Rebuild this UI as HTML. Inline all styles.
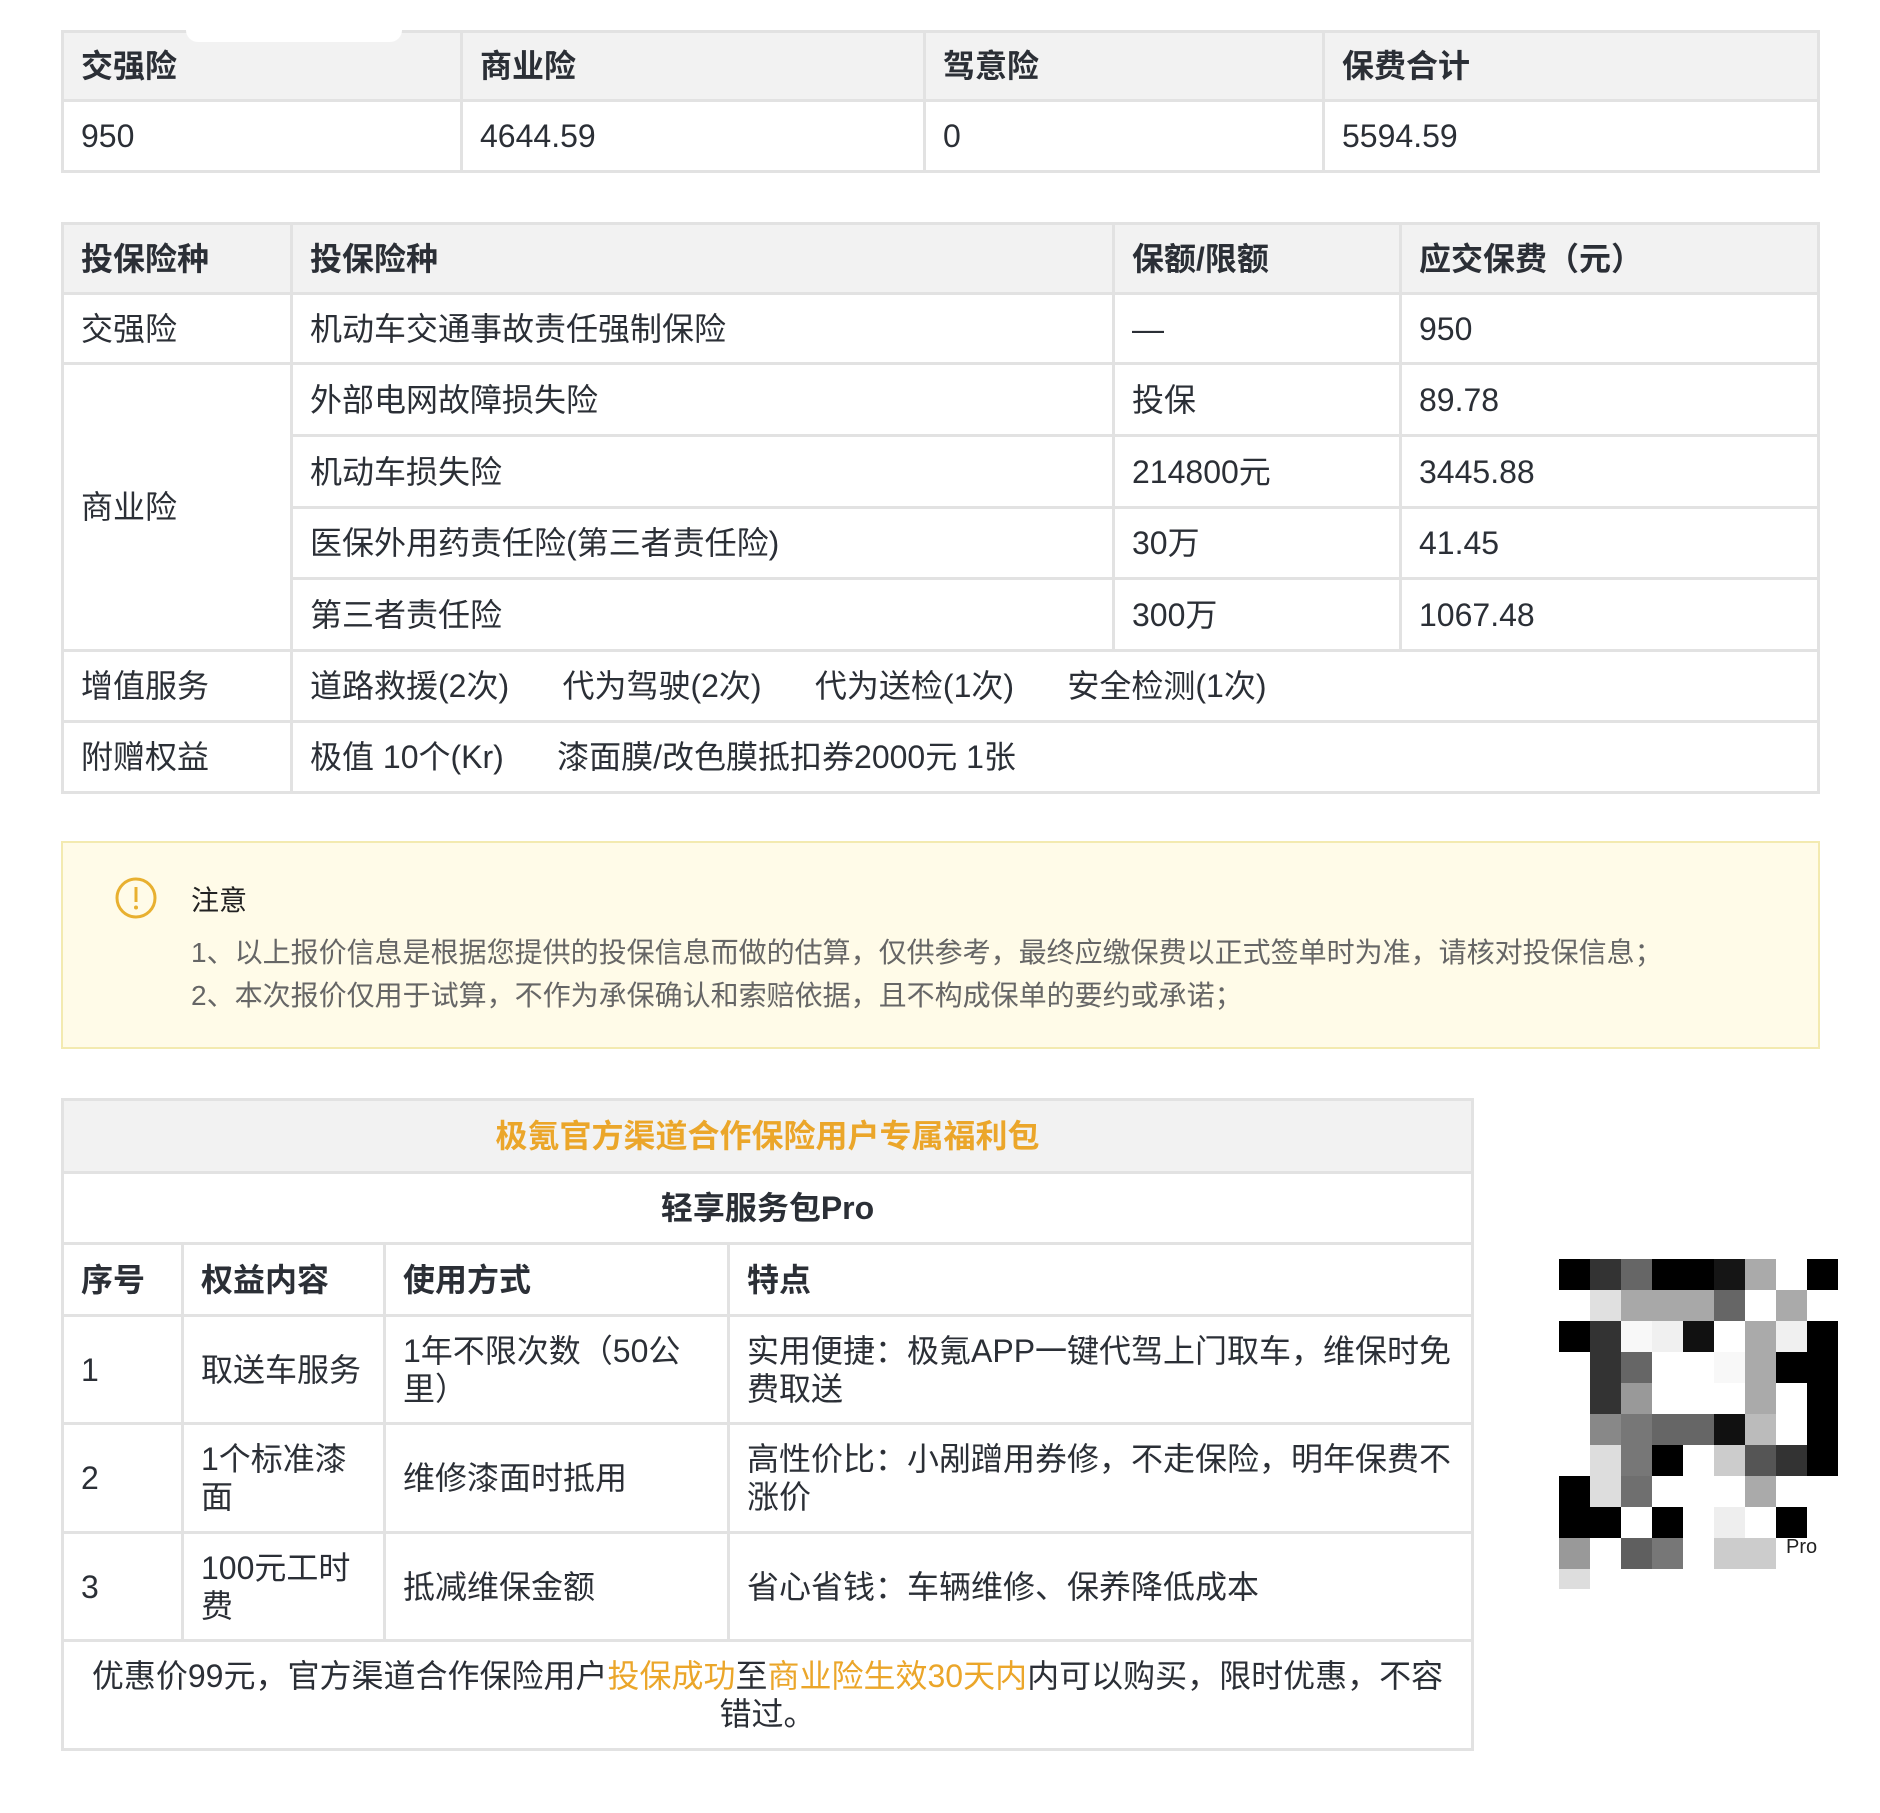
<!DOCTYPE html>
<html><head><meta charset="utf-8"><style>
*{margin:0;padding:0;box-sizing:border-box}
body{width:1880px;height:1813px;background:#fff;position:relative;overflow:hidden;font-family:"Liberation Sans","Noto Sans CJK SC",sans-serif;color:#2b2f36}
table{position:absolute;border-collapse:collapse;table-layout:fixed}
td{border:3px solid #e2e2e2;font-size:32px;padding:0 0 0 17px;vertical-align:middle;line-height:38px}
tr.h td{background:#f2f2f2;font-weight:bold}
.note{position:absolute;left:61px;top:841px;width:1759px;height:208px;background:#fffbe8;border:2px solid #f3eab0}
.qr{position:absolute;left:1559px;top:1259px;display:grid;grid-template-columns:repeat(9,31px);grid-auto-rows:31px}
.or{color:#eba62a}
</style></head><body>

<table style="left:61px;top:30px;width:1759px">
<colgroup><col style="width:399px"><col style="width:463px"><col style="width:399px"><col></colgroup>
<tr class="h" style="height:69px"><td>交强险</td><td>商业险</td><td>驾意险</td><td>保费合计</td></tr>
<tr style="height:71px"><td>950</td><td>4644.59</td><td>0</td><td>5594.59</td></tr>
</table>
<div style="position:absolute;left:186px;top:22px;width:216px;height:20px;background:#fff;border-radius:0 0 12px 12px"></div>

<table style="left:61px;top:222px;width:1759px">
<colgroup><col style="width:229px"><col style="width:822px"><col style="width:287px"><col></colgroup>
<tr class="h" style="height:70px"><td>投保险种</td><td>投保险种</td><td>保额/限额</td><td>应交保费（元）</td></tr>
<tr style="height:70px"><td>交强险</td><td>机动车交通事故责任强制保险</td><td>—</td><td>950</td></tr>
<tr style="height:72px"><td rowspan="4">商业险</td><td>外部电网故障损失险</td><td>投保</td><td>89.78</td></tr>
<tr style="height:72px"><td>机动车损失险</td><td>214800元</td><td>3445.88</td></tr>
<tr style="height:71px"><td>医保外用药责任险(第三者责任险)</td><td>30万</td><td>41.45</td></tr>
<tr style="height:72px"><td>第三者责任险</td><td>300万</td><td>1067.48</td></tr>
<tr style="height:71px"><td>增值服务</td><td colspan="3">道路救援(2次)&nbsp;&nbsp;&nbsp;&nbsp;&nbsp;&nbsp;代为驾驶(2次)&nbsp;&nbsp;&nbsp;&nbsp;&nbsp;&nbsp;代为送检(1次)&nbsp;&nbsp;&nbsp;&nbsp;&nbsp;&nbsp;安全检测(1次)</td></tr>
<tr style="height:71px"><td>附赠权益</td><td colspan="3">极值 10个(Kr)&nbsp;&nbsp;&nbsp;&nbsp;&nbsp;&nbsp;漆面膜/改色膜抵扣券2000元 1张</td></tr>
</table>

<div class="note">
<svg style="position:absolute;left:51px;top:33px" width="44" height="44" viewBox="0 0 44 44"><circle cx="22" cy="22" r="19" fill="none" stroke="#e8b030" stroke-width="3"/><line x1="22" y1="11" x2="22" y2="26" stroke="#e8b030" stroke-width="3"/><circle cx="22" cy="31.5" r="2" fill="#e8b030"/></svg>
<div style="position:absolute;left:128px;top:36px;font-size:28px;color:#222">注意</div>
<div style="position:absolute;left:128px;top:88px;font-size:28px;color:#666;line-height:43px;white-space:nowrap">1、以上报价信息是根据您提供的投保信息而做的估算，仅供参考，最终应缴保费以正式签单时为准，请核对投保信息；<br>2、本次报价仅用于试算，不作为承保确认和索赔依据，且不构成保单的要约或承诺；</div>
</div>

<table style="left:61px;top:1098px;width:1413px">
<colgroup><col style="width:120px"><col style="width:202px"><col style="width:344px"><col></colgroup>
<tr class="h" style="height:73px"><td colspan="4" style="text-align:center;padding:0" class="or">极氪官方渠道合作保险用户专属福利包</td></tr>
<tr style="height:71px"><td colspan="4" style="text-align:center;padding:0;font-weight:bold">轻享服务包Pro</td></tr>
<tr style="height:72px"><td style="font-weight:bold">序号</td><td style="font-weight:bold">权益内容</td><td style="font-weight:bold">使用方式</td><td style="font-weight:bold">特点</td></tr>
<tr style="height:108px"><td>1</td><td>取送车服务</td><td>1年不限次数（50公里）</td><td>实用便捷：极氪APP一键代驾上门取车，维保时免费取送</td></tr>
<tr style="height:109px"><td>2</td><td>1个标准漆<br>面</td><td>维修漆面时抵用</td><td>高性价比：小剐蹭用券修，不走保险，明年保费不涨价</td></tr>
<tr style="height:108px"><td>3</td><td>100元工时<br>费</td><td>抵减维保金额</td><td>省心省钱：车辆维修、保养降低成本</td></tr>
<tr style="height:109px"><td colspan="4" style="text-align:center;padding:0 26px">优惠价99元，官方渠道合作保险用户<span class="or">投保成功</span>至<span class="or">商业险生效30天内</span>内可以购买，限时优惠，不容错过。</td></tr>
</table>

<div class="qr">
<i style="background:#000"></i><i style="background:#333"></i><i style="background:#666"></i><i style="background:#000"></i><i style="background:#000"></i><i style="background:#151515"></i><i style="background:#aaa"></i><i></i><i style="background:#000"></i>
<i></i><i style="background:#e0e0e0"></i><i style="background:#a8a8a8"></i><i style="background:#a8a8a8"></i><i style="background:#a8a8a8"></i><i style="background:#666"></i><i></i><i style="background:#aaa"></i><i></i>
<i style="background:#000"></i><i style="background:#333"></i><i style="background:#f8f8f8"></i><i style="background:#f0f0f0"></i><i style="background:#111"></i><i></i><i style="background:#aaa"></i><i style="background:#f0f0f0"></i><i style="background:#000"></i>
<i></i><i style="background:#333"></i><i style="background:#666"></i><i></i><i></i><i style="background:#f8f8f8"></i><i style="background:#aaa"></i><i style="background:#000"></i><i style="background:#000"></i>
<i></i><i style="background:#333"></i><i style="background:#999"></i><i></i><i></i><i></i><i style="background:#aaa"></i><i></i><i style="background:#000"></i>
<i></i><i style="background:#888"></i><i style="background:#777"></i><i style="background:#666"></i><i style="background:#666"></i><i style="background:#111"></i><i style="background:#bbb"></i><i></i><i style="background:#000"></i>
<i></i><i style="background:#ddd"></i><i style="background:#777"></i><i style="background:#000"></i><i></i><i style="background:#ccc"></i><i style="background:#555"></i><i style="background:#333"></i><i style="background:#000"></i>
<i style="background:#000"></i><i style="background:#ddd"></i><i style="background:#6f6f6f"></i><i></i><i></i><i></i><i style="background:#aaa"></i><i></i><i></i>
<i style="background:#000"></i><i style="background:#000"></i><i></i><i style="background:#000"></i><i></i><i style="background:#eee"></i><i></i><i style="background:#000"></i><i></i>
<i style="background:#999"></i><i></i><i style="background:#5f5f5f"></i><i style="background:#777"></i><i></i><i style="background:#ccc"></i><i style="background:#ccc"></i><i></i><i></i>
</div>
<div style="position:absolute;left:1786px;top:1536px;font-size:20px;color:#222">Pro</div>
<div style="position:absolute;left:1559px;top:1569px;width:31px;height:20px;background:#ddd"></div>
</body></html>
